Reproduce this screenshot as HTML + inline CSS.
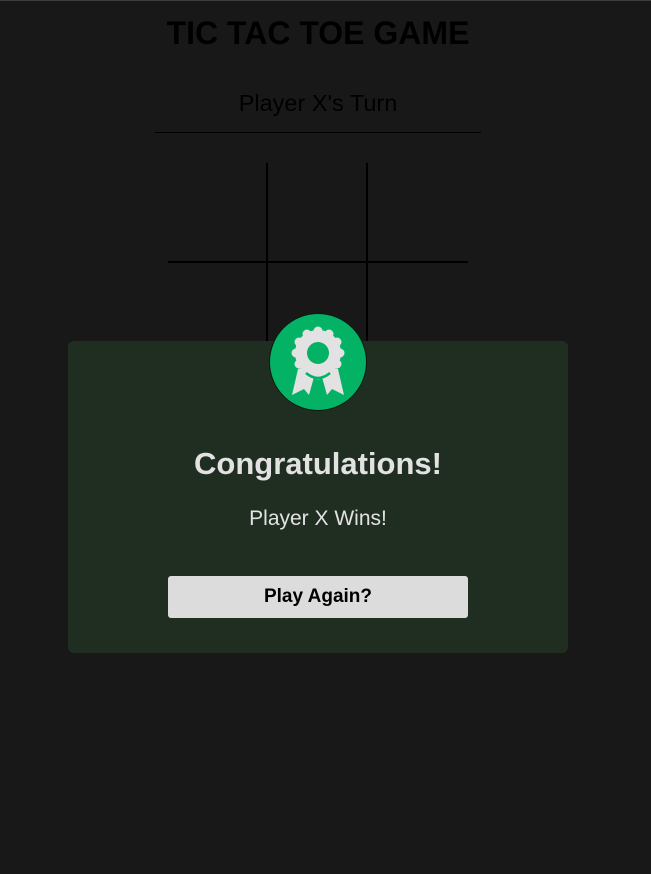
<!DOCTYPE html>
<html><head><style>
body{margin:0;width:651px;height:874px;background:#181818;font-family:"Liberation Sans",Arial,sans-serif;position:relative;overflow:hidden;border-top:1px solid #3a3f3a;box-sizing:border-box}
.t{position:absolute;left:0;width:636px;text-align:center;top:14px;font-size:32px;font-weight:bold;color:#000}
.turn{position:absolute;left:0;width:636px;text-align:center;top:89px;font-size:23.5px;color:#000}
.hl{position:absolute;left:155px;width:326px;top:131px;height:1px;background:#000}
.v{position:absolute;width:2px;background:#000;top:162px;height:190px}
.h{position:absolute;left:168px;width:300px;top:260px;height:2px;background:#000}
.modal{position:absolute;left:68px;top:340px;width:500px;height:312px;background:#202e22;border-radius:6px}
.c{position:absolute;left:269px;top:312px;width:96px;height:96px;border-radius:50%;background:#03b264;border:1px solid #0a1a10}
.h2{position:absolute;left:68px;width:500px;text-align:center;top:445px;font-size:31px;font-weight:bold;color:#e2e2e2}
.p{position:absolute;left:68px;width:500px;text-align:center;top:506px;font-size:21px;color:#e2e2e2}
.b{position:absolute;left:168px;top:575px;width:300px;height:42px;background:#dcdcdc;border-radius:3px;text-align:center;line-height:41px;font-size:19px;font-weight:bold;color:#000}
</style></head><body>
<div class="t">TIC TAC TOE GAME</div>
<div class="turn">Player X's Turn</div>
<div class="hl"></div>
<div class="v" style="left:266px"></div><div class="v" style="left:366px"></div>
<div class="h"></div>
<div class="modal"></div>
<div class="c"></div>
<svg style="position:absolute;left:269px;top:312px" width="98" height="98" viewBox="0 0 98 98">
<g fill="#e2e2e2">
<path d="M29 56 L37 54 L45 64 L40 82 L35 76 L23 82 Z"/>
<path d="M69 56 L61 54 L53 64 L58 82 L63 76 L75 82 Z"/>
<g transform="translate(49,40)">
<circle r="23"/>
<circle r="4.5" cx="0" cy="-22"/><circle r="4.5" cx="11" cy="-19"/><circle r="4.5" cx="19" cy="-11"/><circle r="4.5" cx="22" cy="0"/><circle r="4.5" cx="19" cy="11"/><circle r="4.5" cx="11" cy="19"/><circle r="4.5" cx="0" cy="22"/><circle r="4.5" cx="-11" cy="19"/><circle r="4.5" cx="-19" cy="11"/><circle r="4.5" cx="-22" cy="0"/><circle r="4.5" cx="-19" cy="-11"/><circle r="4.5" cx="-11" cy="-19"/>
</g>
</g>
<path d="M37 60 Q49 70 61 60" stroke="#03b264" stroke-width="2.5" fill="none"/>
<circle cx="49" cy="40" r="11" fill="#03b264"/>
</svg>
<div class="h2">Congratulations!</div>
<div class="p">Player X Wins!</div>
<div class="b">Play Again?</div>
</body></html>
